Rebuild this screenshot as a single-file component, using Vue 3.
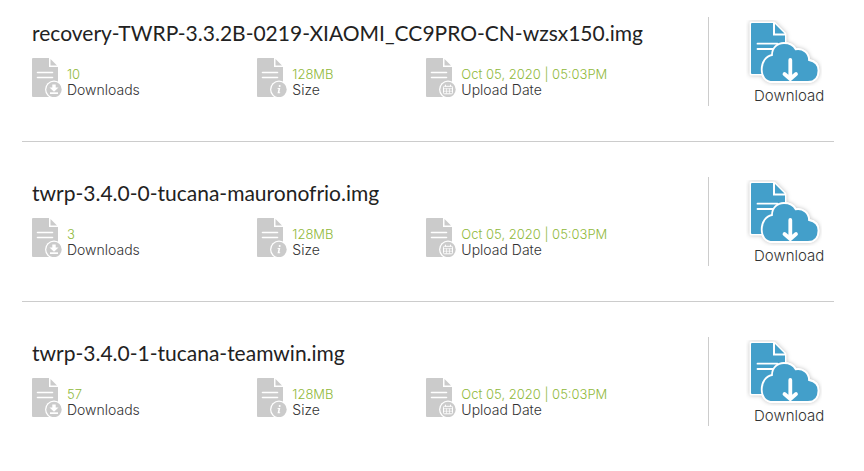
<script setup>
const files = [
  { name: 'recovery-TWRP-3.3.2B-0219-XIAOMI_CC9PRO-CN-wzsx150.img', downloads: '10' },
  { name: 'twrp-3.4.0-0-tucana-mauronofrio.img', downloads: '3' },
  { name: 'twrp-3.4.0-1-tucana-teamwin.img', downloads: '57' },
].map((file) => ({
  ...file,
  stats: [
    { kind: 'downloads', value: file.downloads, label: 'Downloads' },
    { kind: 'size', value: '128MB', label: 'Size' },
    { kind: 'date', value: 'Oct 05, 2020 | 05:03PM', label: 'Upload Date' },
  ],
}))
const cloud =
  'M27 62C19 62 15.700 56 15.700 49.500C15.700 42 20 36 26 35C26 28 31 23 38 23C43 23 47.500 25 49.700 29.300C57 28 63 33 63 40C69 41 72.500 45 72.500 50.500C72.500 57 69 62 62 62Z'
</script>

<template>
  <main class="files">
    <article v-for="file in files" :key="file.name" class="file">
      <div class="info">
        <h2 class="name">{{ file.name }}</h2>
        <dl class="stats">
          <div v-for="stat in file.stats" :key="stat.kind" class="stat">
            <svg class="stat-icon" viewBox="0 0 30 39" aria-hidden="true">
              <path d="M1 0H17V9H26V39H1Q0 39 0 38V1Q0 0 1 0Z" fill="#cbcbcb" />
              <path d="M18.500 1L25 7.500H18.500Z" fill="#cbcbcb" />
              <path d="M5.500 14.500H20.500M5.500 19.500H20.500" stroke="#fff" stroke-width="1.600" stroke-linecap="round" />
              <circle cx="22" cy="31.500" r="9" fill="#fff" />
              <circle cx="22" cy="31.500" r="7.700" fill="#cbcbcb" />
              <g v-if="stat.kind === 'downloads'" fill="#fff">
                <path d="M20.300 26.500H23.700V29.500H26.500L22 33.700L17.500 29.500H20.300Z" />
                <rect x="18" y="34.300" width="8" height="1.700" />
              </g>
              <g v-else-if="stat.kind === 'size'" fill="#fff">
                <circle cx="22.700" cy="28" r="1" />
                <path d="M20.700 30H23.300L22.400 34.200H23.300L23 35.300H20.500L21.500 31H20.500Z" />
              </g>
              <g v-else fill="none" stroke="#fff">
                <rect x="17.500" y="28.300" width="9" height="7.500" rx="1" />
                <path d="M17.500 30.700H26.500M17.500 33.200H26.500M20.500 30.500V35.500M23.500 30.500V35.500" stroke-width="0.700" />
                <path d="M19.500 26.700V28.500M24.500 26.700V28.500" />
              </g>
            </svg>
            <div class="stat-text">
              <dt>{{ stat.label }}</dt>
              <dd>{{ stat.value }}</dd>
            </div>
          </div>
        </dl>
      </div>
      <a href="#" class="download">
        <svg class="download-icon" viewBox="0 0 76 66" aria-hidden="true">
          <g class="shape">
            <path d="M5 3H28L39 14V54H5Z" fill="#fff" stroke="#fff" stroke-width="3" stroke-linejoin="round" />
            <path :d="cloud" fill="#fff" stroke="#fff" stroke-width="2" />
          </g>
          <path d="M6 3H27V15.500H39V54H6Q5 54 5 53V4Q5 3 6 3Z" fill="#439fca" />
          <path d="M29 4L38.500 13.500H29Z" fill="#439fca" />
          <path d="M11.500 23.700H31.500M11.500 29H27" stroke="#fff" stroke-width="1.800" stroke-linecap="round" />
          <path :d="cloud" fill="#439fca" stroke="#fff" stroke-width="1.800" />
          <path d="M44.300 40V57M38.500 54L44.300 59L50 54" fill="none" stroke="#fff" stroke-width="3.800" stroke-linecap="round" stroke-linejoin="round" />
        </svg>
        <span>Download</span>
      </a>
    </article>
  </main>
</template>

<style>
body {
  margin: 0;
  background: #fff;
}
</style>

<style scoped>
.files {
  padding: 0 30px 0 22px;
  font-family: Inter, "Liberation Sans", sans-serif;
  font-weight: 300;
  color: #333;
}
.file {
  display: grid;
  grid-template-columns: 1fr 126px;
  padding: 35px 0;
  border-bottom: 1px solid #ccc;
}
.file:first-child {
  padding-top: 17px;
}
.file:last-child {
  border-bottom: 0;
}
.info {
  padding-left: 10px;
}
.name {
  margin: 0 0 9px;
  font: 400 21px/32px Lato, sans-serif;
  color: #222;
}
.stats {
  display: grid;
  grid-template-columns: 4fr 3fr 5fr;
  margin: 0;
}
.stat {
  display: flex;
  gap: 5px;
}
.stat-icon {
  width: 30px;
  height: 39px;
}
.stat-text {
  display: flex;
  flex-direction: column-reverse;
  justify-content: flex-start;
  font-size: 13px;
  line-height: 15px;
}
dt {
  font-size: 14px;
}
dd {
  margin: 0;
  color: #8fb93a;
}
.download {
  display: grid;
  grid-template-rows: 66px 18px;
  row-gap: 1px;
  justify-items: start;
  height: 89px;
  box-sizing: border-box;
  padding: 3px 0 1px 37px;
  border-left: 1px solid #ccc;
  color: #333;
  font-size: 15px;
  line-height: 18px;
  text-decoration: none;
}
.download-icon {
  width: 76px;
  height: 66px;
}
.download span {
  padding-left: 8px;
}
.shape {
  filter: drop-shadow(0 0 2px rgb(0 0 0 / 25%));
}
</style>
